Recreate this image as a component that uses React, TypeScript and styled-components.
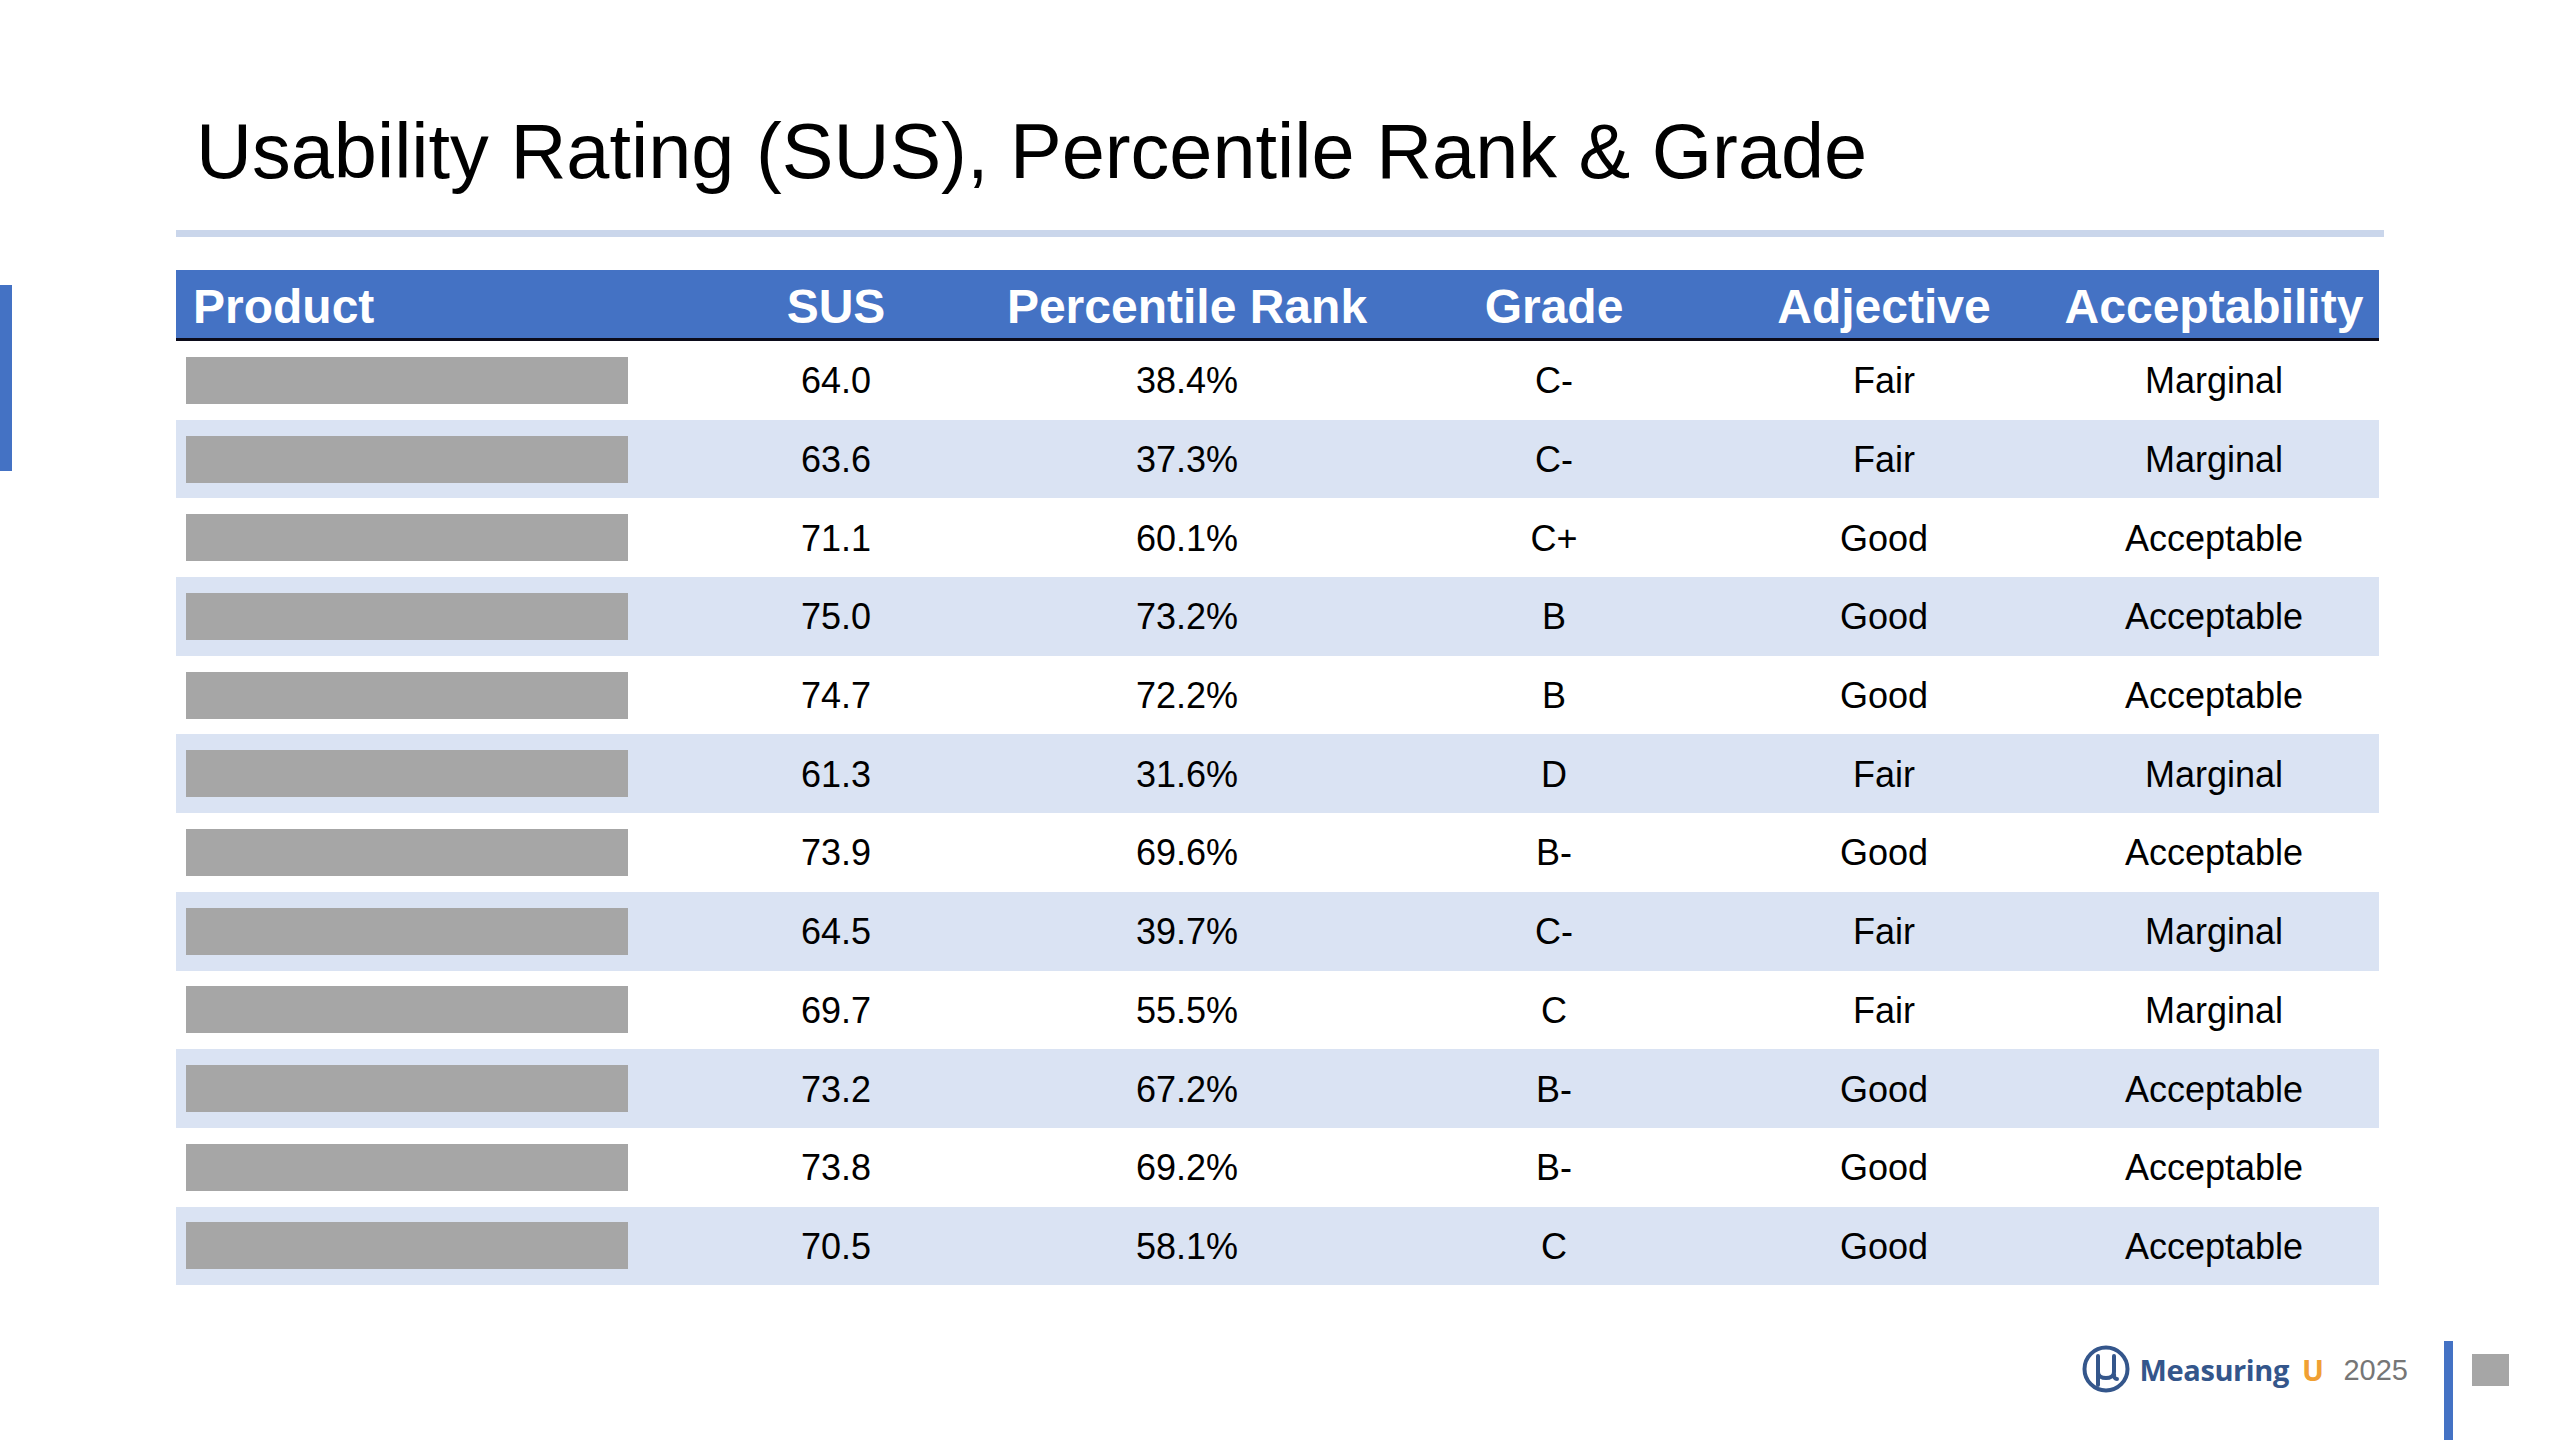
import React from "react"
import styled, {createGlobalStyle} from "styled-components"

const Global = createGlobalStyle`
html, body {
       margin: 0;
       padding: 0;
       background: #fff;
}
body {
       font-family: "Liberation Sans", Arial, sans-serif;
}
`

type Row = {sus: string; rank: string; grade: string; adj: string; acc: string}

const rows: Row[] = [
       {sus: "64.0", rank: "38.4%", grade: "C-", adj: "Fair", acc: "Marginal"},
       {sus: "63.6", rank: "37.3%", grade: "C-", adj: "Fair", acc: "Marginal"},
       {sus: "71.1", rank: "60.1%", grade: "C+", adj: "Good", acc: "Acceptable"},
       {sus: "75.0", rank: "73.2%", grade: "B", adj: "Good", acc: "Acceptable"},
       {sus: "74.7", rank: "72.2%", grade: "B", adj: "Good", acc: "Acceptable"},
       {sus: "61.3", rank: "31.6%", grade: "D", adj: "Fair", acc: "Marginal"},
       {sus: "73.9", rank: "69.6%", grade: "B-", adj: "Good", acc: "Acceptable"},
       {sus: "64.5", rank: "39.7%", grade: "C-", adj: "Fair", acc: "Marginal"},
       {sus: "69.7", rank: "55.5%", grade: "C", adj: "Fair", acc: "Marginal"},
       {sus: "73.2", rank: "67.2%", grade: "B-", adj: "Good", acc: "Acceptable"},
       {sus: "73.8", rank: "69.2%", grade: "B-", adj: "Good", acc: "Acceptable"},
       {sus: "70.5", rank: "58.1%", grade: "C", adj: "Good", acc: "Acceptable"},
]

const App = () => {
       return (
              <Page>
                     <Global />
                     <AccentBar />
                     <Content>
                            <Title>Usability Rating (SUS), Percentile Rank &amp; Grade</Title>
                            <Rule />
                            <Table>
                                   <HeadRow>
                                          <HeadCell $left>Product</HeadCell>
                                          <HeadCell>SUS</HeadCell>
                                          <HeadCell>Percentile Rank</HeadCell>
                                          <HeadCell>Grade</HeadCell>
                                          <HeadCell>Adjective</HeadCell>
                                          <HeadCell>Acceptability</HeadCell>
                                   </HeadRow>
                                   {rows.map((r, i) => (
                                          <BodyRow key={i} $striped={i % 2 === 1}>
                                                 <ProductCell>
                                                        <Redacted />
                                                 </ProductCell>
                                                 <Cell>{r.sus}</Cell>
                                                 <Cell>{r.rank}</Cell>
                                                 <Cell>{r.grade}</Cell>
                                                 <Cell>{r.adj}</Cell>
                                                 <Cell>{r.acc}</Cell>
                                          </BodyRow>
                                   ))}
                            </Table>
                            <Footer>
                                   <Brand>
                                          <svg width="48" height="48" viewBox="0 0 48 48">
                                                 <circle cx="24" cy="24" r="21.5" fill="none" stroke="#34568b" strokeWidth="4" />
                                                 <path
                                                        d="M16 11 V40 M16 27 C16 35 32 35 32 27 V11 M32 29 C32 33 33 34 35 34"
                                                        fill="none"
                                                        stroke="#34568b"
                                                        strokeWidth="4"
                                                        strokeLinecap="round"
                                                 />
                                          </svg>
                                          <BrandName>
                                                 Measuring<BrandU>U</BrandU>
                                          </BrandName>
                                   </Brand>
                                   <Year>2025</Year>
                                   <FooterBar />
                                   <PageMark />
                            </Footer>
                     </Content>
              </Page>
       )
}

export default App

const Page = styled.div`
width: 2560px;
height: 1440px;
display: flex;
overflow: hidden;
background: #fff;
`
const AccentBar = styled.div`
width: 12px;
height: 186px;
margin-top: 285px;
background-color: #4472c4;
flex-shrink: 0;
`
const Content = styled.div`
flex: 1;
display: flex;
flex-direction: column;
padding-left: 164px;
`
const Title = styled.h1`
margin: 113px 0 0 20px;
font-family: "Liberation Sans", Arial, sans-serif;
font-weight: 400;
font-size: 77.5px;
line-height: 77px;
color: #000;
white-space: nowrap;
`
const Rule = styled.div`
width: 2208px;
height: 7px;
margin-top: 40px;
background-color: #cad6eb;
`
const Table = styled.div`
width: 2203px;
margin-top: 33px;
display: flex;
flex-direction: column;
`
const columns = "511px 298px 404px 330px 330px 330px"

const HeadRow = styled.div`
display: grid;
grid-template-columns: ${columns};
height: 68px;
background-color: #4472c4;
border-bottom: 3px solid #0b0b1a;
`
const HeadCell = styled.div<{$left?: boolean}>`
display: flex;
align-items: center;
justify-content: ${(p) => (p.$left ? "flex-start" : "center")};
padding-left: ${(p) => (p.$left ? "17px" : "0")};
padding-top: 5px;
color: #fff;
font-weight: 700;
font-size: 48px;
white-space: nowrap;
`
const BodyRow = styled.div<{$striped: boolean}>`
display: grid;
grid-template-columns: ${columns};
height: 78.7px;
background-color: ${(p) => (p.$striped ? "#dae3f3" : "#fff")};
`
const ProductCell = styled.div`
display: flex;
align-items: center;
padding-left: 10px;
`
const Redacted = styled.div`
width: 442px;
height: 47px;
background-color: #a6a6a6;
`
const Cell = styled.div`
display: flex;
align-items: center;
justify-content: center;
padding-top: 2px;
font-size: 36px;
color: #000;
`
const Footer = styled.div`
margin-top: auto;
height: 99px;
display: flex;
justify-content: flex-end;
align-items: flex-start;
padding-right: 51px;
`
const Brand = styled.div`
display: flex;
align-items: center;
gap: 10px;
margin-top: 4px;
`
const BrandName = styled.span`
font-family: "Open Sans", sans-serif;
font-weight: 700;
font-size: 29px;
color: #34568b;
letter-spacing: -0.4px;
`
const BrandU = styled.span`
color: #f0a033;
margin-left: 13px;
font-weight: 700;
`
const Year = styled.span`
margin: 13px 0 0 20px;
font-family: "Liberation Sans", Arial, sans-serif;
font-size: 29px;
color: #767676;
`
const FooterBar = styled.div`
align-self: stretch;
width: 9px;
margin-left: 36px;
background-color: #4472c4;
`
const PageMark = styled.div`
width: 37px;
height: 32px;
margin: 13px 0 0 19px;
background-color: #a6a6a6;
`
